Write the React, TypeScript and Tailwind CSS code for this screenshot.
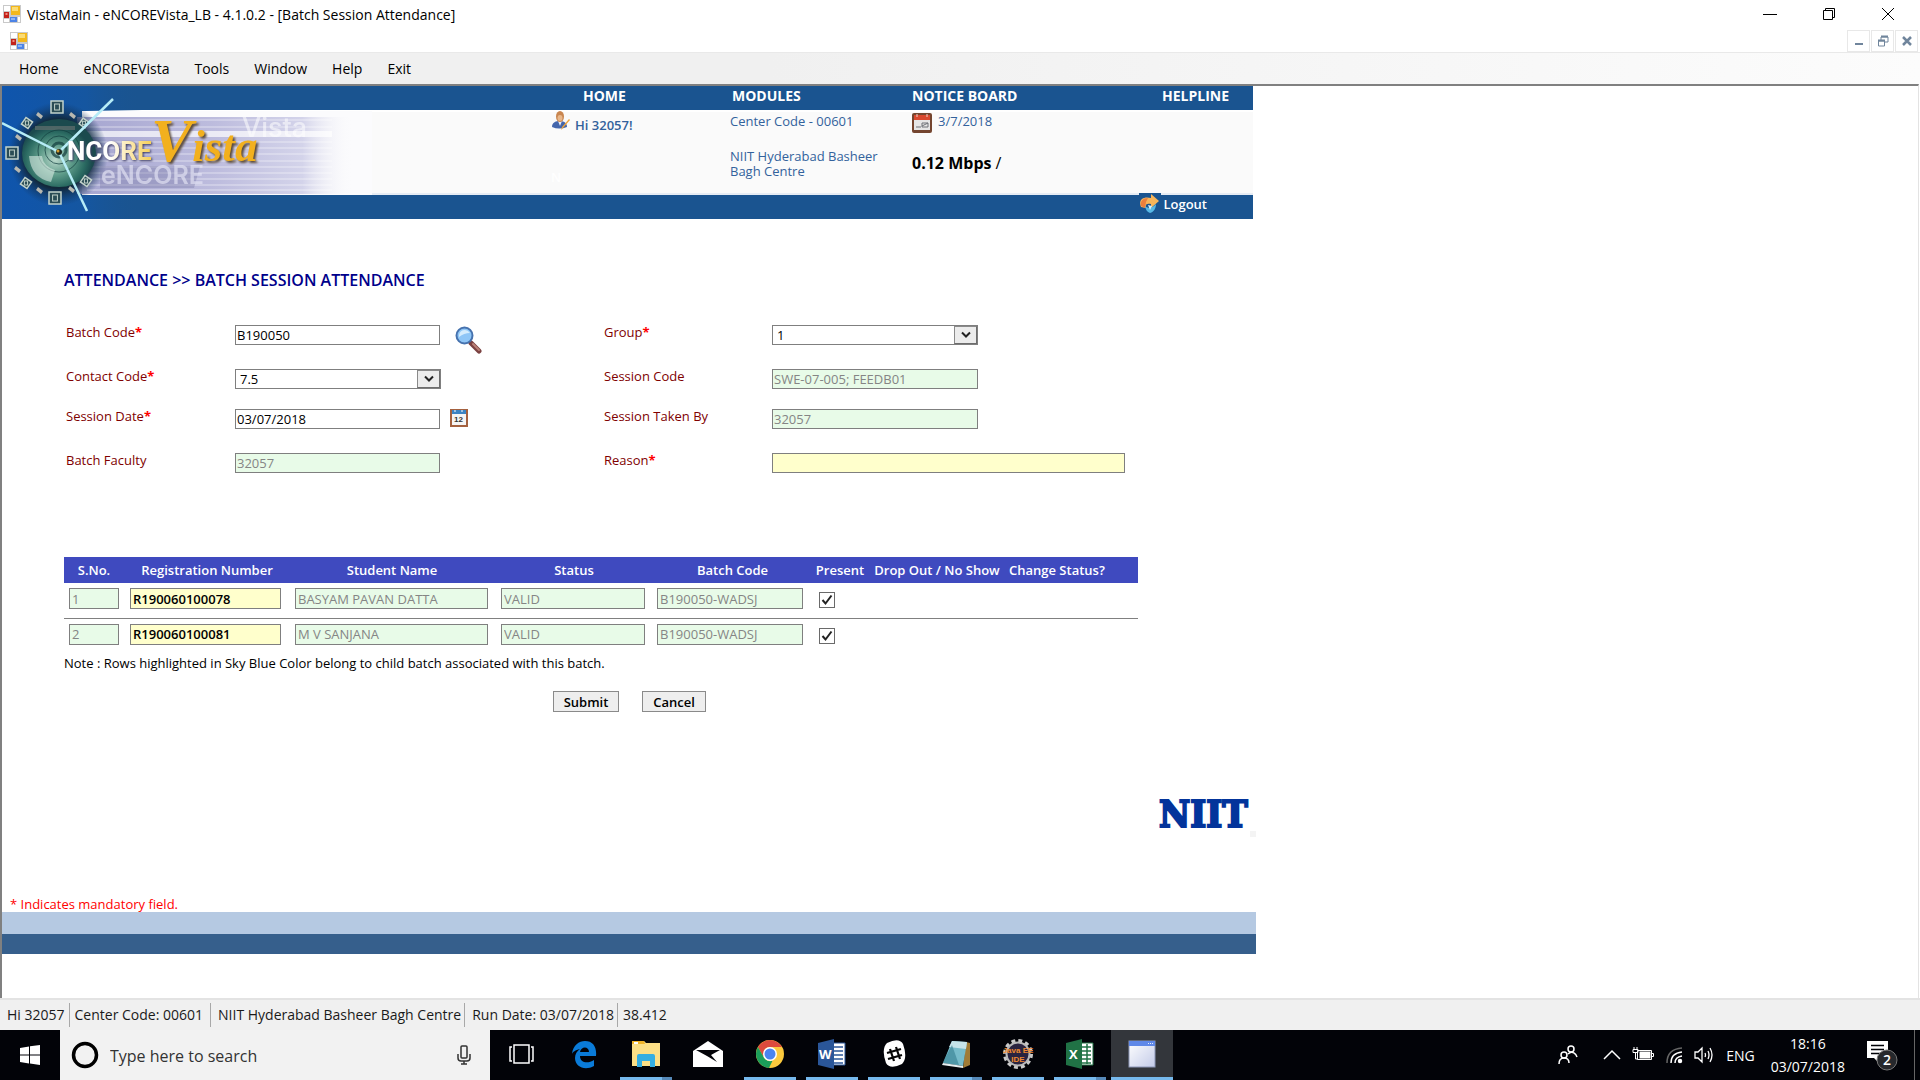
import React from 'react';

const FIELD = 'h-5 rounded-none border border-[#7f7f7f] px-px text-[13px] leading-4 outline-none';
const READONLY = 'bg-[#e8fbe8] text-[#858585]';

function AppIcon() {
  return (
    <svg className="size-[18px] shrink-0" viewBox="0 0 18 18" aria-hidden="true">
      <rect width="18" height="18" fill="#c9c9c9" />
      <path d="M1 1h6v5H1zM1 14h5v3H1zM15 12h2v5h-2z" fill="#fff" />
      <rect x="8" y="1" width="9" height="9" fill="#f3b81c" />
      <rect x="9" y="2" width="6" height="4" fill="#fbdc74" />
      <rect x="1" y="7" width="5" height="6" fill="#c3231a" />
      <rect x="2.500" y="8" width="2" height="2" fill="#ef8d80" />
      <rect x="7" y="12" width="7" height="5" fill="#4c83e6" />
      <rect x="8" y="13" width="4" height="2" fill="#8db4f6" />
    </svg>
  );
}

function TitleBar() {
  const cap = 'flex h-7 w-[59px] items-center justify-center';
  return (
    <header className="flex h-[30px] items-start bg-white pl-[3px]">
      <span className="mt-[5px]"><AppIcon /></span>
      <h1 className="ml-1.5 text-[14px] leading-[29px] text-black">VistaMain - eNCOREVista_LB - 4.1.0.2 - [Batch Session Attendance]</h1>
      <div className="ml-auto flex pr-[3px]">
        <button className={cap} aria-label="Minimize">
          <svg className="size-3.5" viewBox="0 0 14 14"><path d="M0 7.500h14" stroke="#000" /></svg>
        </button>
        <button className={cap} aria-label="Restore">
          <svg className="size-3.5" viewBox="0 0 14 14" fill="none" stroke="#000"><path d="M1.500 3.500h9v9h-9zM3.500 3.500v-2h9v9h-2" /></svg>
        </button>
        <button className={cap} aria-label="Close">
          <svg className="size-3.5" viewBox="0 0 14 14"><path d="M1 1l12 12M13 1L1 13" stroke="#000" /></svg>
        </button>
      </div>
    </header>
  );
}

function ChildBar() {
  const cap = 'flex h-[22px] w-[23px] items-center justify-center border border-[#e8e8e8] bg-white';
  return (
    <div className="flex h-[22px] items-center justify-between bg-white pl-2.5 pr-0.5">
      <AppIcon />
      <div className="flex gap-px">
        <button className={cap} aria-label="Minimize child window">
          <svg className="size-3" viewBox="0 0 12 12"><path d="M2 9h8" stroke="#70859c" strokeWidth="2" /></svg>
        </button>
        <button className={cap} aria-label="Restore child window">
          <svg className="size-3" viewBox="0 0 12 12" fill="none" stroke="#70859c"><path d="M1.500 6h6v5h-6zM4 5V2h7v5H8" /><path d="M1 5.500h7M4 1.500h7" strokeWidth="2" /></svg>
        </button>
        <button className={cap} aria-label="Close child window">
          <svg className="size-3" viewBox="0 0 12 12"><path d="M2 2l8 8M10 2l-8 8" stroke="#70859c" strokeWidth="2.500" /></svg>
        </button>
      </div>
    </div>
  );
}

function MenuBar() {
  return (
    <nav className="flex h-8 items-center gap-[25px] border-t border-[#e9e9e9] bg-gradient-to-r from-[#f0f0f0] from-40% to-[#fcfcfc] pl-[19px] text-[14px] text-black">
      {['Home', 'eNCOREVista', 'Tools', 'Window', 'Help', 'Exit'].map((m) => (
        <button key={m}>{m}</button>
      ))}
    </nav>
  );
}

const BADGES: [number, number, number][] = [
  [55, 21, 12], [82, 37, 7], [84, 95, 8], [53, 112, 12], [24, 97, 8], [10, 67, 12], [25, 37, 8],
];
const TICKS: [number, number][] = [[38, 29], [71, 29], [16, 83], [38, 104], [70, 103], [17, 51]];
const STRIPES = [34, 41, 56, 62, 68, 75, 81, 87, 93, 99, 104];

function BrandArt() {
  return (
    <svg className="absolute left-0 top-0 h-[133px] w-[370px]" viewBox="0 0 370 133" role="img" aria-label="eNCOREVista">
      <defs>
        <linearGradient id="band" x1="0" x2="1">
          <stop offset="0" stopColor="#9c9ccb" />
          <stop offset=".5" stopColor="#b6b5da" />
          <stop offset=".82" stopColor="#cfcfe8" />
          <stop offset="1" stopColor="#fafafa" stopOpacity="0" />
        </linearGradient>
        <linearGradient id="glow" x1="0" x2="1">
          <stop offset="0" stopColor="#0f55ad" />
          <stop offset=".6" stopColor="#1556a0" />
          <stop offset="1" stopColor="#1a5490" stopOpacity="0" />
        </linearGradient>
        <linearGradient id="word" x1="0" x2="1">
          <stop offset=".5" stopColor="#fff" />
          <stop offset="1" stopColor="#f6cf55" />
        </linearGradient>
        <radialGradient id="dial" cx=".45" cy=".6">
          <stop offset="0" stopColor="#b9d8cb" />
          <stop offset=".45" stopColor="#5f9c8a" />
          <stop offset=".8" stopColor="#2b6b62" />
          <stop offset="1" stopColor="#1b4a4e" />
        </radialGradient>
        <radialGradient id="halo">
          <stop offset=".66" stopColor="#12283a" />
          <stop offset="1" stopColor="#12365f" stopOpacity="0" />
        </radialGradient>
      </defs>
      <rect width="140" height="133" fill="url(#glow)" />
      <rect x="80" y="25" width="290" height="84" fill="#fbfbfd" />
      <rect x="75" y="31" width="275" height="77" fill="url(#band)" opacity=".9" />
      <rect x="75" y="45" width="255" height="6" fill="#fff" opacity=".7" />
      {STRIPES.map((y) => (
        <path key={y} d={`M85 ${y}H330`} stroke="#fff" strokeWidth="1.500" opacity=".35" />
      ))}
      <ellipse cx="56" cy="68" rx="50" ry="52" fill="url(#halo)" />
      <ellipse cx="57" cy="67" rx="37" ry="34" fill="url(#dial)" />
      <path d="M33 42h40" stroke="#5a6b6b" strokeWidth="4" opacity=".8" />
      <g fill="none" stroke="#123d3e" opacity=".7">
        <circle cx="57" cy="64" r="7" strokeWidth="3" />
        <circle cx="57" cy="64" r="14" />
        <circle cx="57" cy="65" r="21" />
      </g>
      <path d="M27 70q2 22 22 26l4-12q-12-4-13-14z" fill="#d9ebe2" opacity=".6" />
      {BADGES.map(([x, y, s]) => (
        <g key={`${x}-${y}`} fill="none" stroke="#c3d3cb" strokeWidth="1.500">
          <rect x={x - s / 2} y={y - s / 2} width={s} height={s} fill="#2a4c55" transform={s < 10 ? `rotate(35 ${x} ${y})` : undefined} />
          <rect x={x - s / 5} y={y - s / 4} width={s / 2.5} height={s / 2} strokeWidth="1" />
        </g>
      ))}
      {TICKS.map(([x, y]) => (
        <path key={`${x}-${y}`} d={`M${x - 2} ${y - 3}l5 4-2 3-5-4z`} fill="#b9b8b0" />
      ))}
      <path d="M57 66L111 13M57 66L0 37M57 66L85 125" stroke="#b6ecf7" strokeWidth="2.500" />
      <circle cx="57" cy="66" r="3" fill="#1c2a20" />
      <circle cx="56" cy="65" r="1.500" fill="#d39b2c" />
      <text x="240" y="51" fontFamily="Inter, sans-serif" fontWeight="500" fontSize="27" fill="#fff" opacity=".55">Vista</text>
      <path d="M98 80h100l-6 22H98z" fill="#7d7cab" opacity=".4" />
      <text x="99" y="98" fontFamily="Inter, sans-serif" fontWeight="600" fontSize="25" fill="#e6e6f6" opacity=".65">eNCORE</text>
      <text x="65" y="74" fontFamily="Roboto, sans-serif" fontWeight="700" fontSize="26" fill="url(#word)" className="drop-shadow-[1px_1px_1px_#3b3a62]">NCORE</text>
      <text x="149" y="75" fontFamily="'Liberation Serif', serif" fontWeight="700" fontStyle="italic" fontSize="62" fill="#f2b01e" className="drop-shadow-[2px_2px_1px_#5a4a3a]">V<tspan fontSize="45">ista</tspan></text>
    </svg>
  );
}

function Banner() {
  const cols = 'grid grid-cols-[549px_179px_182px_1fr]';
  return (
    <div className="relative max-w-[1251px] bg-[#1a5490]">
      <nav className={`${cols} h-6 text-[14px] font-bold leading-5 text-white`}>
        <a href="#home" className="col-start-2 pl-8">HOME</a>
        <a href="#modules" className="pl-0.5">MODULES</a>
        <span className="flex justify-between pr-6">
          <a href="#notice">NOTICE BOARD</a>
          <a href="#helpline">HELPLINE</a>
        </span>
      </nav>
      <div className={`${cols} h-[85px] border-y-2 border-t-white border-b-[#e6ecf4] bg-[#fafafa] text-[13px] leading-4 text-[#33629c]`}>
        <div className="col-start-2 flex flex-col gap-9 font-semibold">
          <span className="flex items-start gap-1">
            <svg className="-mt-px size-5" viewBox="0 0 20 20" aria-hidden="true">
              <path d="M1 16c0-5 4-6 8-6s7 2 7 6q-8 3-15 0z" fill="#4466ac" />
              <path d="M7 10l2 5 2-5z" fill="#e9edf5" />
              <ellipse cx="9" cy="5.500" rx="4" ry="5.500" fill="#c98650" />
              <ellipse cx="9" cy="7" rx="2.500" ry="3" fill="#e9b88b" />
              <path d="M19 9l-7 8-2 2 1-3 7-8z" fill="#f0a33a" />
            </svg>
            <span className="mt-[5px]">Hi 32057!</span>
          </span>
          <span className="text-white">N</span>
        </div>
        <div className="flex flex-col gap-4 pt-px font-medium">
          <span>Center Code - 00601</span>
          <span className="mt-1 w-[160px] leading-[15px]">NIIT Hyderabad Basheer Bagh Centre</span>
        </div>
        <div className="flex flex-col gap-[22px] pt-px">
          <span className="flex items-start gap-1.5 font-medium">
            <svg className="h-5 w-5" viewBox="0 0 20 20" aria-hidden="true">
              <rect width="20" height="20" rx="2" fill="#74452f" />
              <rect x="2" y="2" width="16" height="5" fill="#d9492f" />
              <path d="M5 1v3M15 1v3" stroke="#f3d6cd" />
              <rect x="2" y="7" width="16" height="10" fill="#e6e6e6" />
              <path d="M4 14h5M10 13l6-3M10 10h6v4h-6z" stroke="#6f7378" fill="none" />
            </svg>
            3/7/2018
          </span>
          <span className="text-[16px] text-black"><b>0.12 Mbps</b> /</span>
        </div>
      </div>
      <div className="flex h-6 justify-end pr-[46px]">
        <a href="#logout" className="flex items-start gap-0.5 text-[13px] font-semibold leading-[18px] text-white">
          <svg className="-mt-0.5 h-5 w-[22px]" viewBox="0 0 22 20" aria-hidden="true">
            <rect width="22" height="20" fill="#1a5490" />
            <path d="M2 14C-1 7 4 3 12 5V1l8 7-8 7v-4c-4-1-6 0-5 4z" fill="#f7b55a" />
            <path d="M2 13c-1-5 2-8 7-8l-2 4-1 6z" fill="#ec7f3c" />
            <path d="M6 13c3 3 8 2 11-2 0 4-2 8-6 9-3-1-4-3-5-7z" fill="#57b8e6" />
            <path d="M9 12l4 1-2 4z" fill="#d7f0fb" />
          </svg>
          Logout
        </a>
      </div>
      <BrandArt />
    </div>
  );
}

function Label({ id, text, required }: { id: string; text: string; required?: boolean }) {
  return (
    <label htmlFor={id} className="text-[13px] font-medium leading-[14px] text-[#800000]">
      {text}
      {required && <span className="font-bold text-[#ff0000]">*</span>}
    </label>
  );
}

function Select({ id, value }: { id: string; value: string }) {
  return (
    <div className="relative flex h-5 w-[206px]">
      <select id={id} className="h-5 w-full appearance-none rounded-none border border-[#7f7f7f] bg-white px-1 py-0 text-[13px] leading-4 text-black" defaultValue={value}>
        <option>{value}</option>
      </select>
      <span className="pointer-events-none absolute right-px top-px flex h-[18px] w-[23px] items-center justify-center border border-[#8a8a8a] border-b-[#6d6d6d] border-r-[#6d6d6d] bg-[#ececec]">
        <svg className="h-2 w-3" viewBox="0 0 12 8"><path d="M2 1.500l4 4 4-4" fill="none" stroke="#222" strokeWidth="2" /></svg>
      </span>
    </div>
  );
}

function AttendanceForm() {
  return (
    <form id="attendance" className="mt-[33px] grid grid-cols-[169px_369px_168px_353px] grid-rows-[44px_40px_44px_40px] items-start pl-[64px]">
      <Label id="batch" text="Batch Code" required />
      <div className="flex h-5 gap-[15px]">
        <input id="batch" className={`${FIELD} w-[205px] bg-white text-black`} defaultValue="B190050" />
        <button type="button" aria-label="Find batch" className="size-7">
          <svg className="mt-px size-7" viewBox="0 0 28 28">
            <path d="M16 17l8 8" stroke="#7b4242" strokeWidth="5" strokeLinecap="round" />
            <path d="M18 18l6 6" stroke="#bb8176" strokeWidth="2" strokeLinecap="round" />
            <circle cx="9.500" cy="9.500" r="8" fill="#8fc6f7" stroke="#4672ae" strokeWidth="2" />
            <path d="M4 9q1-5 6-5 3 0 5 3-6 0-11 4z" fill="#d5ecfd" />
          </svg>
        </button>
      </div>
      <Label id="group" text="Group" required />
      <Select id="group" value="1" />

      <Label id="contact" text="Contact Code" required />
      <Select id="contact" value="7.5" />
      <Label id="code" text="Session Code" />
      <input id="code" disabled className={`${FIELD} ${READONLY} w-[206px]`} defaultValue="SWE-07-005; FEEDB01" />

      <Label id="date" text="Session Date" required />
      <div className="flex gap-2.5">
        <input id="date" className={`${FIELD} w-[205px] bg-white text-black`} defaultValue="03/07/2018" />
        <button type="button" aria-label="Pick date" className="h-[18px] w-[18px]">
          <svg className="size-[18px]" viewBox="0 0 18 18">
            <rect width="18" height="18" fill="#a4613f" />
            <rect x="2" y="2" width="14" height="14" fill="#f5f5f5" />
            <rect x="2" y="1" width="14" height="4" fill="#3c84c4" />
            <path d="M5 1v2M12 1v2" stroke="#fff" />
            <text x="4" y="13" fontSize="8" fontWeight="700" fontFamily="Liberation Sans, sans-serif" fill="#333">12</text>
          </svg>
        </button>
      </div>
      <Label id="taken" text="Session Taken By" />
      <input id="taken" disabled className={`${FIELD} ${READONLY} w-[206px]`} defaultValue="32057" />

      <Label id="faculty" text="Batch Faculty" />
      <input id="faculty" disabled className={`${FIELD} ${READONLY} w-[205px]`} defaultValue="32057" />
      <Label id="reason" text="Reason" required />
      <input id="reason" className={`${FIELD} w-full bg-[#ffffcc]`} />
    </form>
  );
}

const STUDENTS = [
  { no: '1', reg: 'R190060100078', name: 'BASYAM PAVAN DATTA' },
  { no: '2', reg: 'R190060100081', name: 'M V SANJANA' },
];
const HEADS = ['S.No.', 'Registration Number', 'Student Name', 'Status', 'Batch Code', 'Present', 'Drop Out / No Show'];

function StudentTable() {
  const f = 'block h-[21px] rounded-none border border-[#7f7f7f] px-0.5 text-[13px] leading-4';
  return (
    <table className="ml-[62px] mt-16 w-[1074px] table-fixed border-collapse">
      <colgroup>
        <col className="w-[60px]" />
        <col className="w-[166px]" />
        <col className="w-[204px]" />
        <col className="w-[160px]" />
        <col className="w-[157px]" />
        <col className="w-[58px]" />
        <col className="w-[136px]" />
        <col />
      </colgroup>
      <thead>
        <tr className="h-[26px] bg-[#3f4abf] text-[13px] leading-4 text-white">
          {HEADS.map((h) => (
            <th key={h} className="whitespace-nowrap p-0 font-semibold">{h}</th>
          ))}
          <th className="p-0 pl-1 text-left font-semibold">Change Status?</th>
        </tr>
      </thead>
      <tbody>
        {STUDENTS.map((s) => (
          <tr key={s.no} className="h-[35px] border-b border-[#808080] align-top last:h-[31px] last:border-b-0">
            <td className="p-0 pl-[5px] pt-[5px]"><input aria-label="S.No." disabled className={`${f} ${READONLY} w-[50px]`} defaultValue={s.no} /></td>
            <td className="p-0 pl-1.5 pt-[5px]"><input aria-label="Registration Number" readOnly className={`${f} w-[151px] bg-[#ffffcc] font-semibold text-black`} defaultValue={s.reg} /></td>
            <td className="p-0 pl-[5px] pt-[5px]"><input aria-label="Student Name" disabled className={`${f} ${READONLY} w-[193px]`} defaultValue={s.name} /></td>
            <td className="p-0 pl-[7px] pt-[5px]"><input aria-label="Status" disabled className={`${f} ${READONLY} w-[144px]`} defaultValue="VALID" /></td>
            <td className="p-0 pl-[3px] pt-[5px]"><input aria-label="Batch Code" disabled className={`${f} ${READONLY} w-[146px]`} defaultValue="B190050-WADSJ" /></td>
            <td className="p-0 pl-2 pt-[9px]">
              <span className="relative block size-4">
                <input type="checkbox" aria-label="Present" defaultChecked className="block size-4 appearance-none border border-[#6a6a6a] bg-white" />
                <svg className="pointer-events-none absolute left-0.5 top-0.5 size-3" viewBox="0 0 12 12"><path d="M1.500 6l3 3.500 6-8" fill="none" stroke="#222" strokeWidth="2" /></svg>
              </span>
            </td>
            <td />
            <td />
          </tr>
        ))}
      </tbody>
    </table>
  );
}

function StatusBar() {
  return (
    <footer className="flex h-8 items-center border-t-2 border-[#e3e3e3] bg-[#f0f0f0] text-[14px] leading-6 text-[#1a1a1a]">
      <span className="border-r border-[#a8a8a8] pl-[7px] pr-1">Hi 32057</span>
      <span className="border-r border-[#a8a8a8] pl-[5px] pr-[7px]">Center Code: 00601</span>
      <span className="border-r border-[#a8a8a8] pl-[7px] pr-[3px]">NIIT Hyderabad Basheer Bagh Centre</span>
      <span className="border-r border-[#a8a8a8] pl-[7px] pr-[3px]">Run Date: 03/07/2018</span>
      <span className="pl-[5px]">38.412</span>
    </footer>
  );
}

const ic = 'size-8';
const APPS: { name: string; icon: React.ReactNode; bar?: 'full' | 'split'; active?: boolean }[] = [
  { name: 'Task View', icon: <svg className={ic} viewBox="0 0 32 32" fill="none" stroke="#fff" strokeWidth="1.500"><path d="M8 7h15v18H8zM6 9H4v14h2M25 9h2v14h-2" /></svg> },
  { name: 'Edge', icon: <svg className={ic} viewBox="0 0 32 32"><path d="M4 16C5 7 11 3 17 3c8 0 12 6 11 15H12c0 7 8 8 14 4v6c-9 5-19 1-19-8 0-4 2-7 5-9-5 1-7 3-8 5zm8-2h9c0-6-8-6-9 0z" fill="#0a7bd8" /></svg> },
  { name: 'File Explorer', bar: 'split', icon: <svg className={ic} viewBox="0 0 32 32"><path d="M2 3h12l2 2h14v23H2z" fill="#fcdf86" /><path d="M2 3h12l1 3H2z" fill="#f0b429" /><path d="M4 4h4v2H4z" fill="#fff" /><path d="M7 18q0-2 2-2h14q2 0 2 2v11h-5v-6h-8v6H7z" fill="#35aee2" /></svg> },
  { name: 'Mail', icon: <svg className={ic} viewBox="0 0 32 32"><path d="M1 13L16 3l15 10v16H1z" fill="#fff" /><path d="M4 12h24l-9 5 6 7-10-6z" fill="#020308" /></svg> },
  { name: 'Chrome', bar: 'full', icon: <svg className={ic} viewBox="0 0 32 32"><circle cx="16" cy="16" r="14" fill="#fbc93d" /><path d="M3.900 9A14 14 0 0 1 28.100 9H16a7 7 0 0 0-6 3.500L9.900 19.500z" fill="#dd4a3d" /><path d="M3.900 9L10 19.500a7 7 0 0 0 8.500 3.200L15 30A14 14 0 0 1 3.900 9z" fill="#1b9f5a" /><circle cx="16" cy="16" r="7" fill="#fff" /><circle cx="16" cy="16" r="5.500" fill="#4a84f0" /></svg> },
  { name: 'Word', bar: 'full', icon: <svg className={ic} viewBox="0 0 32 32"><path d="M16 5h13v22H16z" fill="#fff" stroke="#2a5699" /><path d="M18 9h9M18 13h9M18 17h9M18 21h9M18 25h9" stroke="#2a5699" strokeWidth="1.500" /><path d="M2 5l16-4v30L2 27z" fill="#2a5699" /><text x="3" y="21" fontSize="13" fontWeight="700" fontFamily="Open Sans, sans-serif" fill="#fff">W</text></svg> },
  { name: 'Slack', bar: 'full', icon: <svg className={ic} viewBox="0 0 32 32"><path d="M9 5q12-6 16 1 5 14-1 20-12 6-16-1Q3 11 9 5z" fill="#fff" /><path d="M12 11l4 12M18 9l4 12M9 15l14-4M10 21l14-4" stroke="#050505" strokeWidth="2.200" /></svg> },
  { name: 'Notepad', bar: 'split', icon: <svg className={ic} viewBox="0 0 32 32"><path d="M26 4l4 1v22l-7 3z" fill="#a07b35" /><path d="M12 3l15 1-4 24-20-3z" fill="#77bccb" /><path d="M12 3l15 1-1 7-17-2z" fill="#c6e4ea" /><path d="M4 22l8-15 7 20-16-2z" fill="#357f91" opacity=".6" /><path d="M3 25l20 3v2L2 27z" fill="#e6eef0" /></svg> },
  { name: 'Eclipse Java EE IDE', bar: 'full', icon: <svg className={ic} viewBox="0 0 32 32"><circle cx="16" cy="16" r="13" fill="none" stroke="#c9c9c9" strokeWidth="4" strokeDasharray="3.800 3" /><circle cx="16" cy="16" r="11.500" fill="#2a2440" stroke="#b9b9b9" strokeWidth="2" /><g fontSize="8" fontWeight="700" fontFamily="Liberation Sans, sans-serif" fill="#f08a30" textAnchor="middle"><text x="16" y="15">Java EE</text><text x="16" y="24">IDE</text></g></svg> },
  { name: 'Excel', bar: 'split', icon: <svg className={ic} viewBox="0 0 32 32"><path d="M16 5h13v22H16z" fill="#fff" stroke="#207245" /><path d="M18 9h9M18 13h9M18 17h9M18 21h9M18 25h9M23 6v20" stroke="#207245" strokeWidth="1.500" /><path d="M2 5l16-4v30L2 27z" fill="#207245" /><text x="5" y="21" fontSize="13" fontWeight="700" fontFamily="Open Sans, sans-serif" fill="#fff">X</text></svg> },
  { name: 'VistaMain', bar: 'full', active: true, icon: <svg className={ic} viewBox="0 0 32 32"><defs><linearGradient id="win" x2="1" y2="1"><stop stopColor="#fff" /><stop offset="1" stopColor="#c3cbe8" /></linearGradient></defs><rect x="3" y="3" width="26" height="26" fill="url(#win)" stroke="#8d97b8" /><rect x="3" y="3" width="26" height="5" fill="#5f88e8" /><path d="M22 5.500h5" stroke="#e5ecff" strokeDasharray="1 1" /></svg> },
];

function Taskbar() {
  return (
    <div className="flex h-[50px] items-stretch bg-[#020308] text-white">
      <button aria-label="Start" className="flex w-[60px] items-center justify-center">
        <svg className="size-5" viewBox="0 0 20 20"><path d="M0 3l9-1.500V9.500H0zM10 1.300L20 0v9.500H10zM0 10.500h9v8L0 17zM10 10.500h10V20l-10-1.500z" fill="#fff" /></svg>
      </button>
      <label className="flex w-[430px] items-center bg-[#f2f2f2] pl-[11px] pr-4 text-[#222]">
        <svg className="size-7 shrink-0" viewBox="0 0 28 28" aria-hidden="true"><circle cx="14" cy="14" r="11.500" fill="none" stroke="#000" strokeWidth="3.500" /></svg>
        <input aria-label="Search" placeholder="Type here to search" className="ml-[11px] mt-0.5 min-w-0 flex-1 bg-transparent text-[16px] outline-none placeholder:text-[#333]" />
        <svg className="h-5 w-5" viewBox="0 0 20 20" fill="none" stroke="#333" strokeWidth="1.500"><rect x="7" y="1" width="6" height="12" rx="1" /><path d="M4 9v4q0 3 3 3h6q3 0 3-3V9M10 16v3M7 19h6" /></svg>
      </label>
      <div className="flex pl-px">
        {APPS.map((a) => (
          <button key={a.name} aria-label={a.name} className={`flex w-[62px] flex-col ${a.active ? 'bg-[#33363b]' : 'px-[5px]'}`}>
            <span className="flex flex-1 items-center justify-center">{a.icon}</span>
            <span className="flex h-[3px]">
              {a.bar && <span className="flex-1 bg-[#76b9ed]" />}
              {a.bar === 'split' && <span className="w-2.5 bg-[#5689b8]" />}
            </span>
          </button>
        ))}
      </div>
      <div className="ml-auto flex items-center text-[14px]">
        <svg className="size-5" viewBox="0 0 20 20" fill="none" stroke="#fff" strokeWidth="1.500"><circle cx="13" cy="4" r="3" /><circle cx="6" cy="10" r="3" /><path d="M1 19q0-6 5-6t5 5M10 9q3-3 6-1 2 1 3 4" /></svg>
        <svg className="ml-6 size-5" viewBox="0 0 20 20" fill="none" stroke="#fff" strokeWidth="1.500"><path d="M2 14l8-8 8 8" /></svg>
        <svg className="ml-2.5 h-5 w-[22px]" viewBox="0 0 22 20" fill="none" stroke="#fff"><path d="M5.500 5.500h14v9h-14zM20 8.500h1.500v3H20M1 4.500h5v3H1zM2 2v2M5 2v2M3.500 8v6H6" /><rect x="8" y="7" width="10" height="6" fill="#fff" /></svg>
        <svg className="ml-2.5 size-5" viewBox="0 0 20 20" fill="none" stroke="#fff" strokeWidth="1.500"><path d="M3 18Q3 4 18 3" stroke="#666" /><path d="M7 18Q7 8 18 7M11 18q0-6 7-7" /><circle cx="16" cy="16" r="1.500" fill="#fff" /></svg>
        <svg className="ml-2.5 size-5" viewBox="0 0 20 20" fill="none" stroke="#fff" strokeWidth="1.300"><path d="M1 7h3l4-4v14l-4-4H1zM11 8q1 2 0 4M14 6q2 4 0 8M16 3q4 7 0 14" /></svg>
        <span className="ml-3">ENG</span>
        <div className="ml-4 flex flex-col items-center leading-[23px]">
          <span>18:16</span>
          <span>03/07/2018</span>
        </div>
        <button aria-label="Notifications" className="relative ml-[22px] mr-4 size-[31px]">
          <svg className="size-[31px]" viewBox="0 0 31 31">
            <path d="M0 1h21v17h-9v5l-5-5H0z" fill="#fff" />
            <path d="M4 5.500h13M4 9.500h13M4 13.500h10" stroke="#020308" strokeWidth="1.500" />
            <circle cx="20" cy="20" r="10" fill="#26282c" stroke="#777" />
          </svg>
          <span className="absolute bottom-0 right-0 w-[22px] text-center text-[14px] font-semibold leading-[22px]">2</span>
        </button>
        <span className="mr-[5px] h-[50px] w-px bg-[#666]" />
      </div>
    </div>
  );
}

export default function App() {
  const btn = 'h-[21px] border border-[#8a8a8a] bg-[#eeeeee] text-[13px] font-semibold leading-4 text-black';
  return (
    <div className="flex min-h-screen flex-col bg-white font-['Open_Sans',sans-serif]">
      <TitleBar />
      <ChildBar />
      <MenuBar />
      <main className="mr-px flex-1 border-l-2 border-r border-t-2 border-l-[#808080] border-r-[#e3e3e3] border-t-[#808080] bg-white">
        <Banner />
        <h2 className="ml-[62px] mt-[49px] text-[16px] font-semibold leading-6 text-[#00008b]">ATTENDANCE &gt;&gt; BATCH SESSION ATTENDANCE</h2>
        <AttendanceForm />
        <StudentTable />
        <p className="ml-[62px] mt-1 text-[13px] font-medium leading-5 text-black">
          Note : Rows highlighted in Sky Blue Color belong to child batch associated with this batch.
        </p>
        <div className="mt-[18px] flex gap-[23px] pl-[551px]">
          <button type="submit" form="attendance" className={`${btn} w-[66px]`}>Submit</button>
          <button type="button" className={`${btn} w-16`}>Cancel</button>
        </div>
        <div className="mt-[71px] flex max-w-[1254px] items-end justify-end">
          <svg className="h-14 w-[98px]" viewBox="0 0 98 56" role="img" aria-label="NIIT">
            <text x="1" y="44" fontFamily="'DejaVu Serif Condensed', 'DejaVu Serif', serif" fontWeight="700" fontSize="38" fill="#03349b" stroke="#03349b" strokeWidth="2">NIIT</text>
            <rect x="92" y="48" width="6" height="6" fill="#f4f4f4" />
          </svg>
        </div>
        <p className="ml-2 mt-[57px] text-[13px] leading-4 text-[#ff0000]">* Indicates mandatory field.</p>
        <div className="h-[22px] max-w-[1254px] bg-[#b5c9e2]" />
        <div className="h-5 max-w-[1254px] bg-[#365f8c]" />
      </main>
      <StatusBar />
      <Taskbar />
    </div>
  );
}
